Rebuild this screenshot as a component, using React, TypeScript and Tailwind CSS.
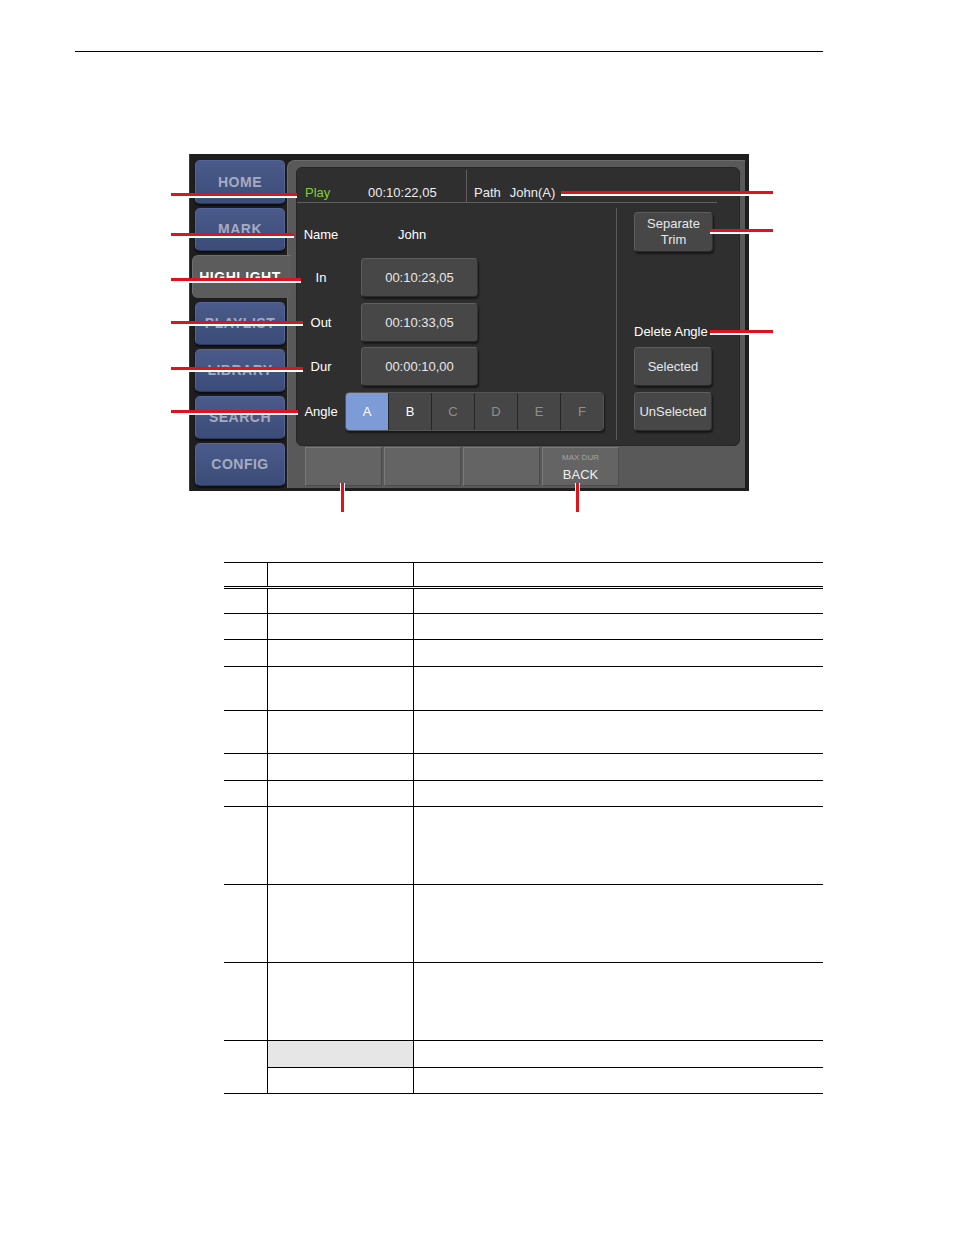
const navItems = ['HOME', 'MARK', 'HIGHLIGHT', 'PLAYLIST', 'LIBRARY', 'SEARCH', 'CONFIG'];

const angles = [
    { id: 'A', active: true, dim: false },
    { id: 'B', active: false, dim: false },
    { id: 'C', active: false, dim: true },
    { id: 'D', active: false, dim: true },
    { id: 'E', active: false, dim: true },
    { id: 'F', active: false, dim: true },
];

// row heights of the empty description table, in px
const tableRows = [26, 26, 27, 44, 43, 27, 26, 78, 78, 78];

const btn =
    'flex items-center justify-center rounded-[4px] border border-[#5e5e5e] border-b-[#2a2a2a] border-r-[#333] bg-[#474747] text-[13px] leading-[16px] text-[#e8e8e8] shadow-[1px_2px_2px_rgba(0,0,0,0.55)]';

function HLine({ top, left, width, end }: { top: number; left: number; width: number; end: 'left' | 'right' }) {
    // red callout line with a thin white rim under it
    return (
        <div className="absolute z-20 h-[5px] bg-white" style={{ top, left, width }}>
            <div className={`h-[3px] bg-[#e3111b] ${end === 'right' ? 'mr-[2px]' : 'ml-[2px]'}`} />
        </div>
    );
}

function VLine({ top, left, height }: { top: number; left: number; height: number }) {
    return (
        <div className="absolute z-20 flex w-[5px] bg-white" style={{ top, left, height }}>
            <div className="ml-[1px] w-[3px] bg-[#e3111b]" />
        </div>
    );
}

function NavButton({ label }: { label: string }) {
    if (label === 'HIGHLIGHT') {
        return (
            <div className="relative z-10 -ml-[3px] -mr-[6px] flex h-[43px] items-center justify-center rounded-l-[6px] border-l border-t border-[#6e6e6e] bg-[#5c5c5c] pr-[4px] text-[14px] font-bold tracking-[0.5px] text-white">
                {label}
            </div>
        );
    }
    return (
        <div
            className={`flex ${label === 'HOME' ? 'h-[44px]' : 'h-[43px]'} items-center justify-center rounded-[5px] border border-[#52649a] border-b-[#2c375a] bg-gradient-to-b from-[#4a5b8b] to-[#3c4c78] text-[14px] font-bold tracking-[0.5px] text-[#a6abbf] shadow-[0_2px_2px_rgba(0,0,0,0.6)]`}
        >
            {label}
        </div>
    );
}

function TimeRow({ label, value, className = '' }: { label: string; value: string; className?: string }) {
    return (
        <div className={`flex h-[39px] items-center ${className}`}>
            <div className="w-[48px] text-center text-[13px] text-white">{label}</div>
            <div className={`ml-[16px] h-[39px] w-[117px] ${btn}`}>{value}</div>
        </div>
    );
}

function BottomButton({ children }: { children?: React.ReactNode }) {
    return (
        <div className="flex h-[39px] w-[77px] flex-col items-center border border-[#7a7a7a] border-b-[#4b4b4b] border-r-[#4b4b4b] bg-[#646464]">
            {children}
        </div>
    );
}

export default function App() {
    return (
        <div className="relative min-h-[1235px] w-[954px] bg-white font-['Liberation_Sans',Arial,sans-serif]">
            {/* page rule */}
            <div className="ml-[75px] h-px w-[748px] pt-[51px]" />
            <div className="ml-[75px] h-px w-[748px] bg-black" />

            {/* Screenshot with callouts */}
            <div className="relative mt-[102px]">
                <div className="ml-[189px] flex h-[337px] w-[560px] border-l border-[#3a3a3a] bg-[#1e1e1e] pb-[3px] pl-[5px] pr-[4px] pt-[6px]">
                    {/* Nav */}
                    <div className="flex w-[90px] flex-col gap-[4px]">
                        {navItems.map((n) => (
                            <NavButton key={n} label={n} />
                        ))}
                    </div>

                    {/* Gray panel */}
                    <div className="ml-[2px] flex flex-1 flex-col rounded-tl-[8px] border-l border-t border-[#6c6c6c] bg-[#595959] pl-[8px] pr-[5px] pt-[6px]">
                        {/* Dark panel */}
                        <div className="flex h-[279px] flex-col rounded-[6px] border border-[#262626] bg-[#2f2f2f] text-[13px] text-[#eeeeee]">
                            {/* header */}
                            <div className="flex h-[35px] w-[420px] items-end border-b border-[#5f5f5f] pb-[2px] leading-[14px]">
                                <span className="w-[71px] pl-[8px] text-[#7fcf2e]">Play</span>
                                <span className="w-[98px]">00:10:22,05</span>
                                <div className="-mb-[2px] h-[32px] w-px bg-[#5f5f5f]" />
                                <span className="pl-[7px]">Path</span>
                                <span className="pl-[9px]">John(A)</span>
                            </div>

                            {/* body */}
                            <div className="flex flex-1">
                                <div className="flex w-[319px] flex-col">
                                    <div className="flex h-[55px] items-center pt-[9px]">
                                        <div className="w-[48px] text-center text-white">Name</div>
                                        <div className="ml-[53px] text-white">John</div>
                                    </div>
                                    <TimeRow label="In" value="00:10:23,05" />
                                    <TimeRow label="Out" value="00:10:33,05" className="mt-[6px]" />
                                    <TimeRow label="Dur" value="00:00:10,00" className="mt-[5px]" />
                                    <div className="mt-[6px] flex h-[39px] items-center">
                                        <div className="w-[48px] text-center text-white">Angle</div>
                                        <div className="flex h-[39px] overflow-hidden rounded-[4px] border border-[#555] bg-[#262626] shadow-[1px_2px_2px_rgba(0,0,0,0.5)]">
                                            {angles.map((a, i) => (
                                                <div
                                                    key={a.id}
                                                    className={`flex w-[42px] items-center justify-center ${i > 0 ? 'ml-[1px]' : ''} ${
                                                        a.active
                                                            ? 'bg-[#7c9bd7] text-white'
                                                            : a.dim
                                                              ? 'bg-[#464646] text-[#8e8e8e]'
                                                              : 'bg-[#464646] text-white'
                                                    }`}
                                                >
                                                    {a.id}
                                                </div>
                                            ))}
                                        </div>
                                    </div>
                                </div>

                                <div className="my-[5px] w-px bg-[#5a5a5a]" />

                                <div className="flex flex-1 flex-col pl-[17px] pt-[9px]">
                                    <div className={`h-[40px] w-[79px] flex-col ${btn}`}>
                                        <span>Separate</span>
                                        <span>Trim</span>
                                    </div>
                                    <div className="mt-[72px] leading-[16px] text-white">Delete Angle</div>
                                    <div className={`mt-[7px] h-[39px] w-[78px] ${btn}`}>Selected</div>
                                    <div className={`mt-[6px] h-[39px] w-[78px] ${btn}`}>UnSelected</div>
                                </div>
                            </div>
                        </div>

                        {/* bottom buttons */}
                        <div className="mt-px flex gap-[2px] pl-[9px]">
                            <BottomButton />
                            <BottomButton />
                            <BottomButton />
                            <BottomButton>
                                <span className="pt-[5px] text-[8px] leading-[10px] text-[#a5a5a5]">MAX DUR</span>
                                <span className="mt-[4px] text-[13px] leading-[16px] text-[#f0f0f0]">BACK</span>
                            </BottomButton>
                        </div>
                    </div>
                </div>

                {/* callouts */}
                <HLine top={39} left={169} width={128} end="left" />
                <HLine top={79} left={169} width={125} end="left" />
                <HLine top={124} left={169} width={132} end="left" />
                <HLine top={167} left={169} width={134} end="left" />
                <HLine top={213} left={169} width={134} end="left" />
                <HLine top={256} left={169} width={129} end="left" />
                <HLine top={37} left={561} width={214} end="right" />
                <HLine top={75} left={710} width={65} end="right" />
                <HLine top={176} left={710} width={65} end="right" />
                <VLine top={329} left={340} height={29} />
                <VLine top={329} left={575} height={29} />
            </div>

            {/* Description table (empty) */}
            <table className="ml-[224px] mt-[71px] w-[599px] table-fixed border-collapse">
                <colgroup>
                    <col className="w-[43px]" />
                    <col className="w-[146px]" />
                    <col className="w-[410px]" />
                </colgroup>
                <thead>
                    <tr className="h-[25px] border-b-[3px] border-t border-double border-black">
                        <th className="border-r border-black" />
                        <th className="border-r border-black" />
                        <th />
                    </tr>
                </thead>
                <tbody>
                    {tableRows.map((h, i) => (
                        <tr key={i} className="border-b border-black" style={{ height: h }}>
                            <td className="border-r border-black" />
                            <td className="border-r border-black" />
                            <td />
                        </tr>
                    ))}
                    <tr className="h-[27px] border-b border-black">
                        <td rowSpan={2} className="border-r border-black" />
                        <td className="border-r border-black bg-[#e6e6e6]" />
                        <td />
                    </tr>
                    <tr className="h-[26px] border-b border-black">
                        <td className="border-r border-black" />
                        <td />
                    </tr>
                </tbody>
            </table>
        </div>
    );
}
